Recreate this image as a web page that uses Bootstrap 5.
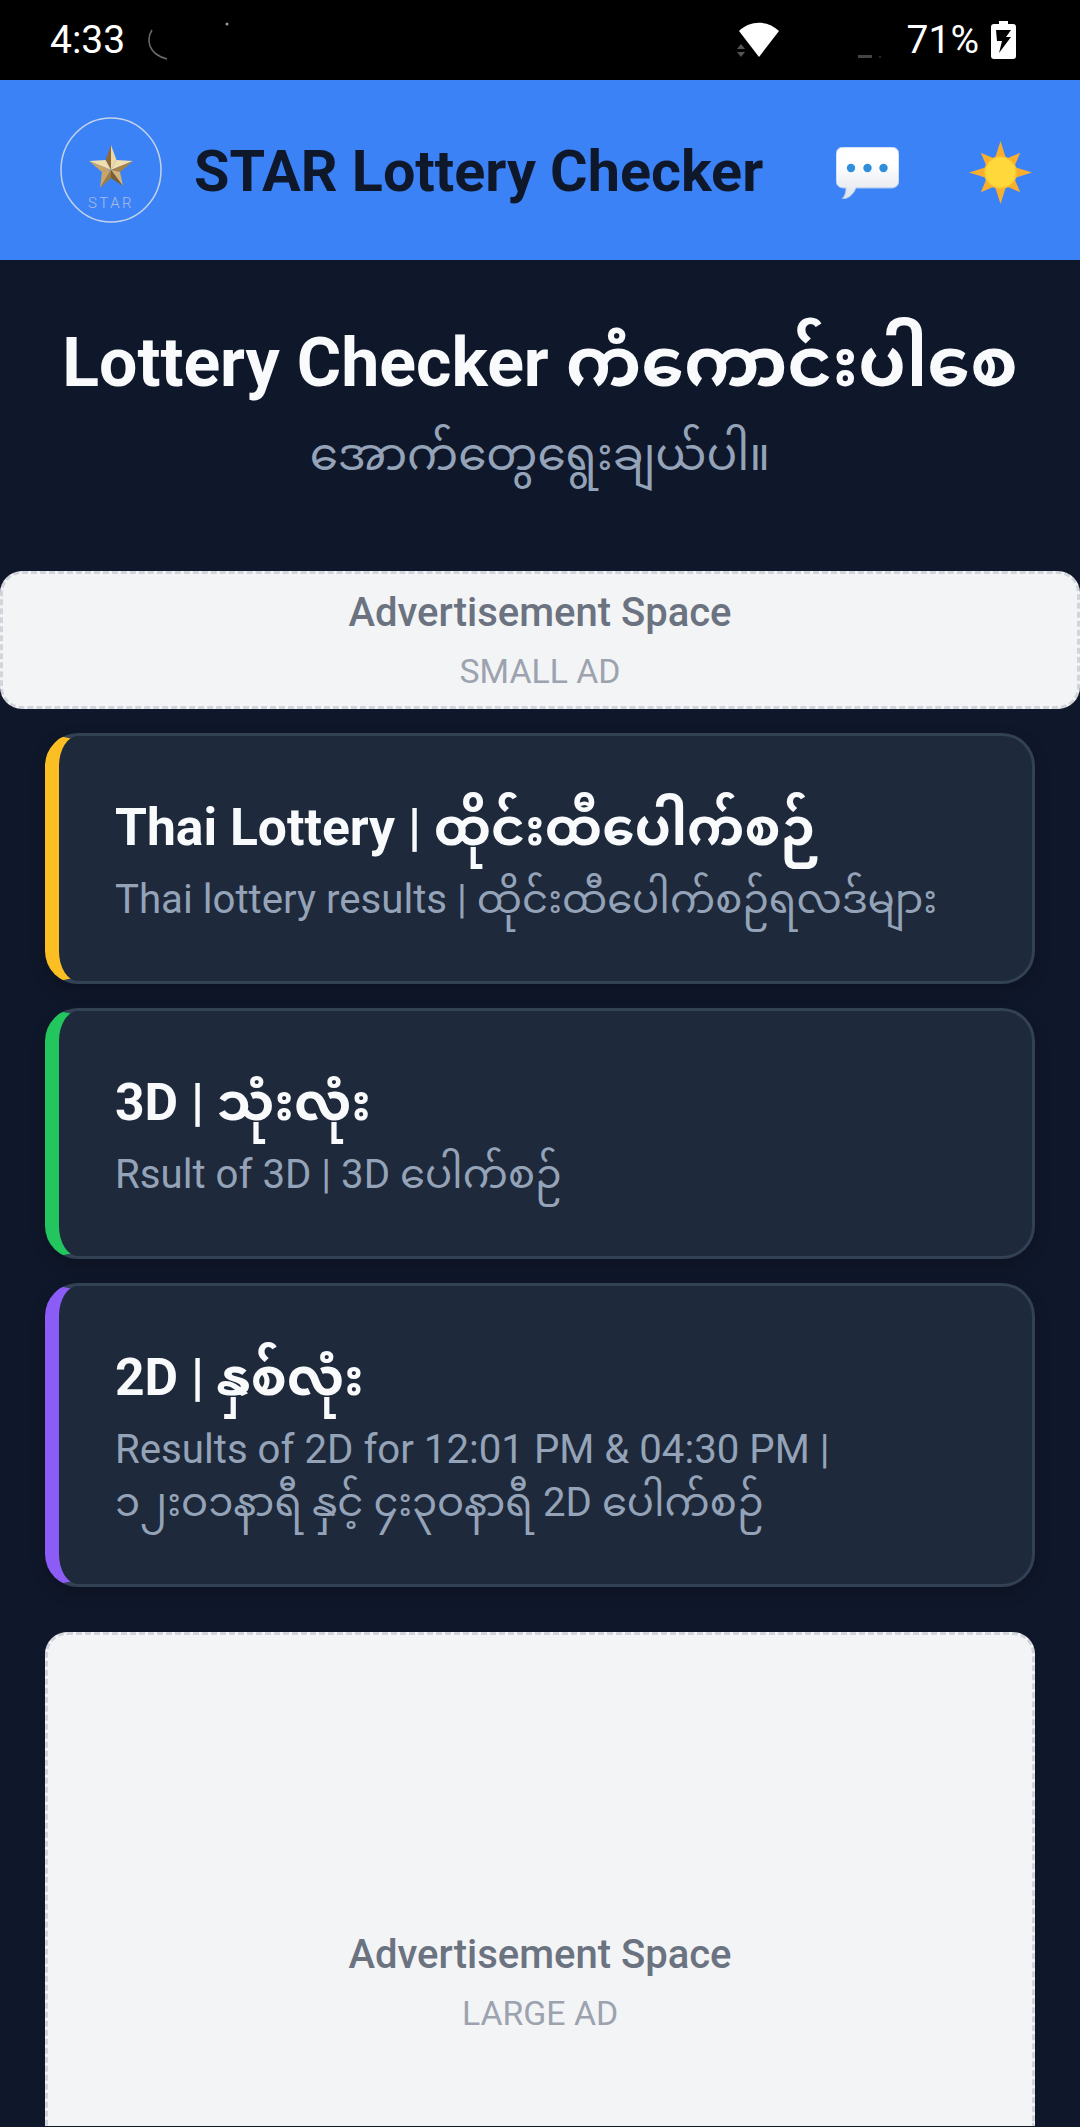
<!DOCTYPE html>
<html lang="my">
<head>
  <meta charset="UTF-8" />
  <meta name="viewport" content="width=device-width, initial-scale=1.0" />
  <title>STAR Lottery Checker</title>
  <link href="https://cdn.jsdelivr.net/npm/bootstrap@5.3.2/dist/css/bootstrap.min.css" rel="stylesheet" />
  <style>
    body {
      background-color: #0f172a;
      font-family: Roboto, "Noto Sans", "Noto Sans Myanmar", Padauk, sans-serif;
    }

    .status-strip {
      height: 80px;
      background-color: #000;
      color: #fff;
      font-size: 39px;
      padding: 0 64px 0 50px;
    }

    .status-arc {
      margin-left: 20px;
    }

    .status-smudge {
      margin-left: 76px;
    }

    .status-pct {
      margin-left: 21px;
    }

    .status-battery {
      margin-left: 12px;
    }

    .app-header {
      height: 180px;
      background-color: #3b82f6;
      padding: 5px 48px 0 60px;
    }

    .app-logo {
      margin-bottom: 5px;
    }

    .app-title {
      font-size: 57.5px;
      font-weight: 700;
      color: #0f172a;
      margin: 0 0 2px 32px;
      line-height: 1;
      white-space: nowrap;
    }

    .sun-icon {
      margin-left: 70px;
    }

    .hero-block {
      padding-top: 64px;
      height: 311px;
    }

    .hero-title {
      font-size: 68px;
      font-weight: 700;
      color: #f8fafc;
      line-height: 78px;
      margin: 0;
      white-space: nowrap;
    }

    .hero-sub {
      font-size: 45.5px;
      color: #94a3b8;
      line-height: 60px;
      margin: 23px 0 0;
    }

    .ad-box {
      background-color: #f3f4f6;
      border: 3px dashed #d1d5db;
      border-radius: 22px;
    }

    .ad-small {
      height: 138px;
      padding-top: 2px;
    }

    /* coupe en bas de l'ecran, comme la capture */
    .ad-large {
      height: 494px;
      margin: 45px 45px 0;
      padding-top: 297px;
      border-bottom: 0;
      border-radius: 22px 22px 0 0;
    }

    .ad-heading {
      font-size: 40px;
      font-weight: 500;
      color: #6b7280;
      line-height: 46px;
    }

    .ad-size {
      font-size: 33.8px;
      color: #9ca3af;
      line-height: 40px;
      margin-top: 16px;
    }

    .lottery-list {
      padding: 24px 45px 0;
    }

    .lottery-card {
      background-color: #1e293b;
      border: 3px solid #334155;
      border-left-width: 14px;
      border-radius: 33px;
      padding: 61px 56px 55px;
      box-shadow: 0 6px 16px rgba(0, 0, 0, 0.2);
    }

    .card-one {
      border-left-color: #fbbf24;
    }

    .card-two {
      border-left-color: #22c55e;
    }

    .card-three {
      border-left-color: #8b5cf6;
    }

    .card-name {
      font-size: 51.6px;
      font-weight: 700;
      color: #f8fafc;
      line-height: 62px;
      margin: 0;
    }

    .card-text {
      font-size: 40.2px;
      color: #94a3b8;
      line-height: 53px;
      margin: 14px 0 0;
    }
  </style>
</head>
<body>
  <!-- barre d'etat -->
  <div class="status-strip d-flex align-items-center">
    <span>4:33</span>
    <svg class="status-arc" width="90" height="40" viewBox="0 0 90 40"><path d="M7 10C1 20 3 34 22 39" fill="none" stroke="#6b6b6b" stroke-width="1.5"/><circle cx="82" cy="4" r="1.5" fill="#999"/></svg>
    <svg class="ms-auto" width="44" height="36" viewBox="0 0 44 36"><path d="M3 9C14-2 32-2 43 9L23 35Z" fill="#fff"/><path d="M5 22l4 5H1ZM1 30h8l-4 5Z" fill="#555"/></svg>
    <svg class="status-smudge" width="30" height="36" viewBox="0 0 30 36"><path d="M2 33h14v3H2Z" fill="#444"/><circle cx="24" cy="35" r="1" fill="#333"/></svg>
    <span class="status-pct">71%</span>
    <svg class="status-battery" width="25" height="38" viewBox="0 0 25 38"><path d="M8 0h9v3h5a3 3 0 0 1 3 3v29a3 3 0 0 1-3 3H3a3 3 0 0 1-3-3V6a3 3 0 0 1 3-3h5Z" fill="#fff"/><path d="M5 9h15l-5 7h5L8 32l3-12H6Z" fill="#000"/></svg>
  </div>

  <header class="app-header d-flex align-items-center">
    <svg class="app-logo" width="102" height="108" viewBox="0 0 102 108">
      <ellipse cx="51" cy="54" rx="50" ry="52" fill="none" stroke="#c4d2ea" stroke-width="1.5"/>
      <path d="M51 29L45.5 44 51 54Z" fill="#8a6a3a"/>
      <path d="M51 29L56.5 44 51 54Z" fill="#ecd9a6"/>
      <path d="M29 45L45.5 44 51 54Z" fill="#f1dfb0"/>
      <path d="M29 45L42 56 51 54Z" fill="#c9a668"/>
      <path d="M73 45L56.5 44 51 54Z" fill="#f1dfb0"/>
      <path d="M73 45L60 56 51 54Z" fill="#a98345"/>
      <path d="M40 72L42 56 51 54Z" fill="#c9a668"/>
      <path d="M40 72L51 62 51 54Z" fill="#a07a3e"/>
      <path d="M63 70L60 56 51 54Z" fill="#d4b477"/>
      <path d="M63 70L51 62 51 54Z" fill="#7d5c2e"/>
      <text x="51" y="92" text-anchor="middle" font-family="Roboto, sans-serif" font-size="15" font-weight="300" letter-spacing="2.5" fill="#a9bde6">STAR</text>
    </svg>
    <h1 class="app-title">STAR Lottery Checker</h1>
    <svg class="ms-auto" width="63" height="52" viewBox="0 0 63 52">
      <defs><linearGradient id="bubbleFill" x1="0" y1="0" x2="0" y2="1"><stop offset="0.35" stop-color="#fff"/><stop offset="1" stop-color="#dde2ea"/></linearGradient></defs>
      <path d="M7 0h49a7 7 0 0 1 7 7v27a7 7 0 0 1-7 7H20c-3 7-8 11-14 11 3-3 4-7 4-11H7a7 7 0 0 1-7-7V7a7 7 0 0 1 7-7Z" fill="url(#bubbleFill)" stroke="#a9c6f2" stroke-width="1"/>
      <circle cx="15" cy="21" r="4.2" fill="#2f8fdc"/><circle cx="31.500" cy="21" r="4.2" fill="#2f8fdc"/><circle cx="47.500" cy="21" r="4.2" fill="#2f8fdc"/>
    </svg>
    <svg class="sun-icon" width="63" height="63" viewBox="0 0 64 64">
      <path d="M32 0L37.700 18.100 52 12 45.900 26.300 64 32 45.900 37.700 52 52 37.700 45.900 32 64 26.300 45.900 12 52 18.100 37.700 0 32 18.100 26.300 12 12 26.300 18.100Z" fill="#f9ae2d"/>
      <circle cx="32" cy="32" r="16" fill="#ffd93b" stroke="#fbc02d" stroke-width="1.5"/>
    </svg>
  </header>

  <section class="hero-block text-center">
    <h2 class="hero-title">Lottery Checker ကံကောင်းပါစေ</h2>
    <p class="hero-sub">အောက်တွေရွေးချယ်ပါ။</p>
  </section>

  <div class="ad-box ad-small d-flex flex-column align-items-center justify-content-center">
    <div class="ad-heading">Advertisement Space</div>
    <div class="ad-size">SMALL AD</div>
  </div>

  <main class="lottery-list d-flex flex-column gap-4">
    <div class="lottery-card card-one">
      <h3 class="card-name">Thai Lottery | ထိုင်းထီပေါက်စဉ်</h3>
      <p class="card-text">Thai lottery results | ထိုင်းထီပေါက်စဉ်ရလဒ်များ</p>
    </div>
    <div class="lottery-card card-two">
      <h3 class="card-name">3D | သုံးလုံး</h3>
      <p class="card-text">Rsult of 3D | 3D ပေါက်စဉ်</p>
    </div>
    <div class="lottery-card card-three">
      <h3 class="card-name">2D | နှစ်လုံး</h3>
      <p class="card-text">Results of 2D for 12:01 PM &amp; 04:30 PM | ၁၂းဝ၁နာရီ နှင့် ၄း၃ဝနာရီ 2D ပေါက်စဉ်</p>
    </div>
  </main>

  <div class="ad-box ad-large d-flex flex-column align-items-center">
    <div class="ad-heading">Advertisement Space</div>
    <div class="ad-size">LARGE AD</div>
  </div>

  <script src="https://cdn.jsdelivr.net/npm/bootstrap@5.3.2/dist/js/bootstrap.bundle.min.js"></script>
</body>
</html>
